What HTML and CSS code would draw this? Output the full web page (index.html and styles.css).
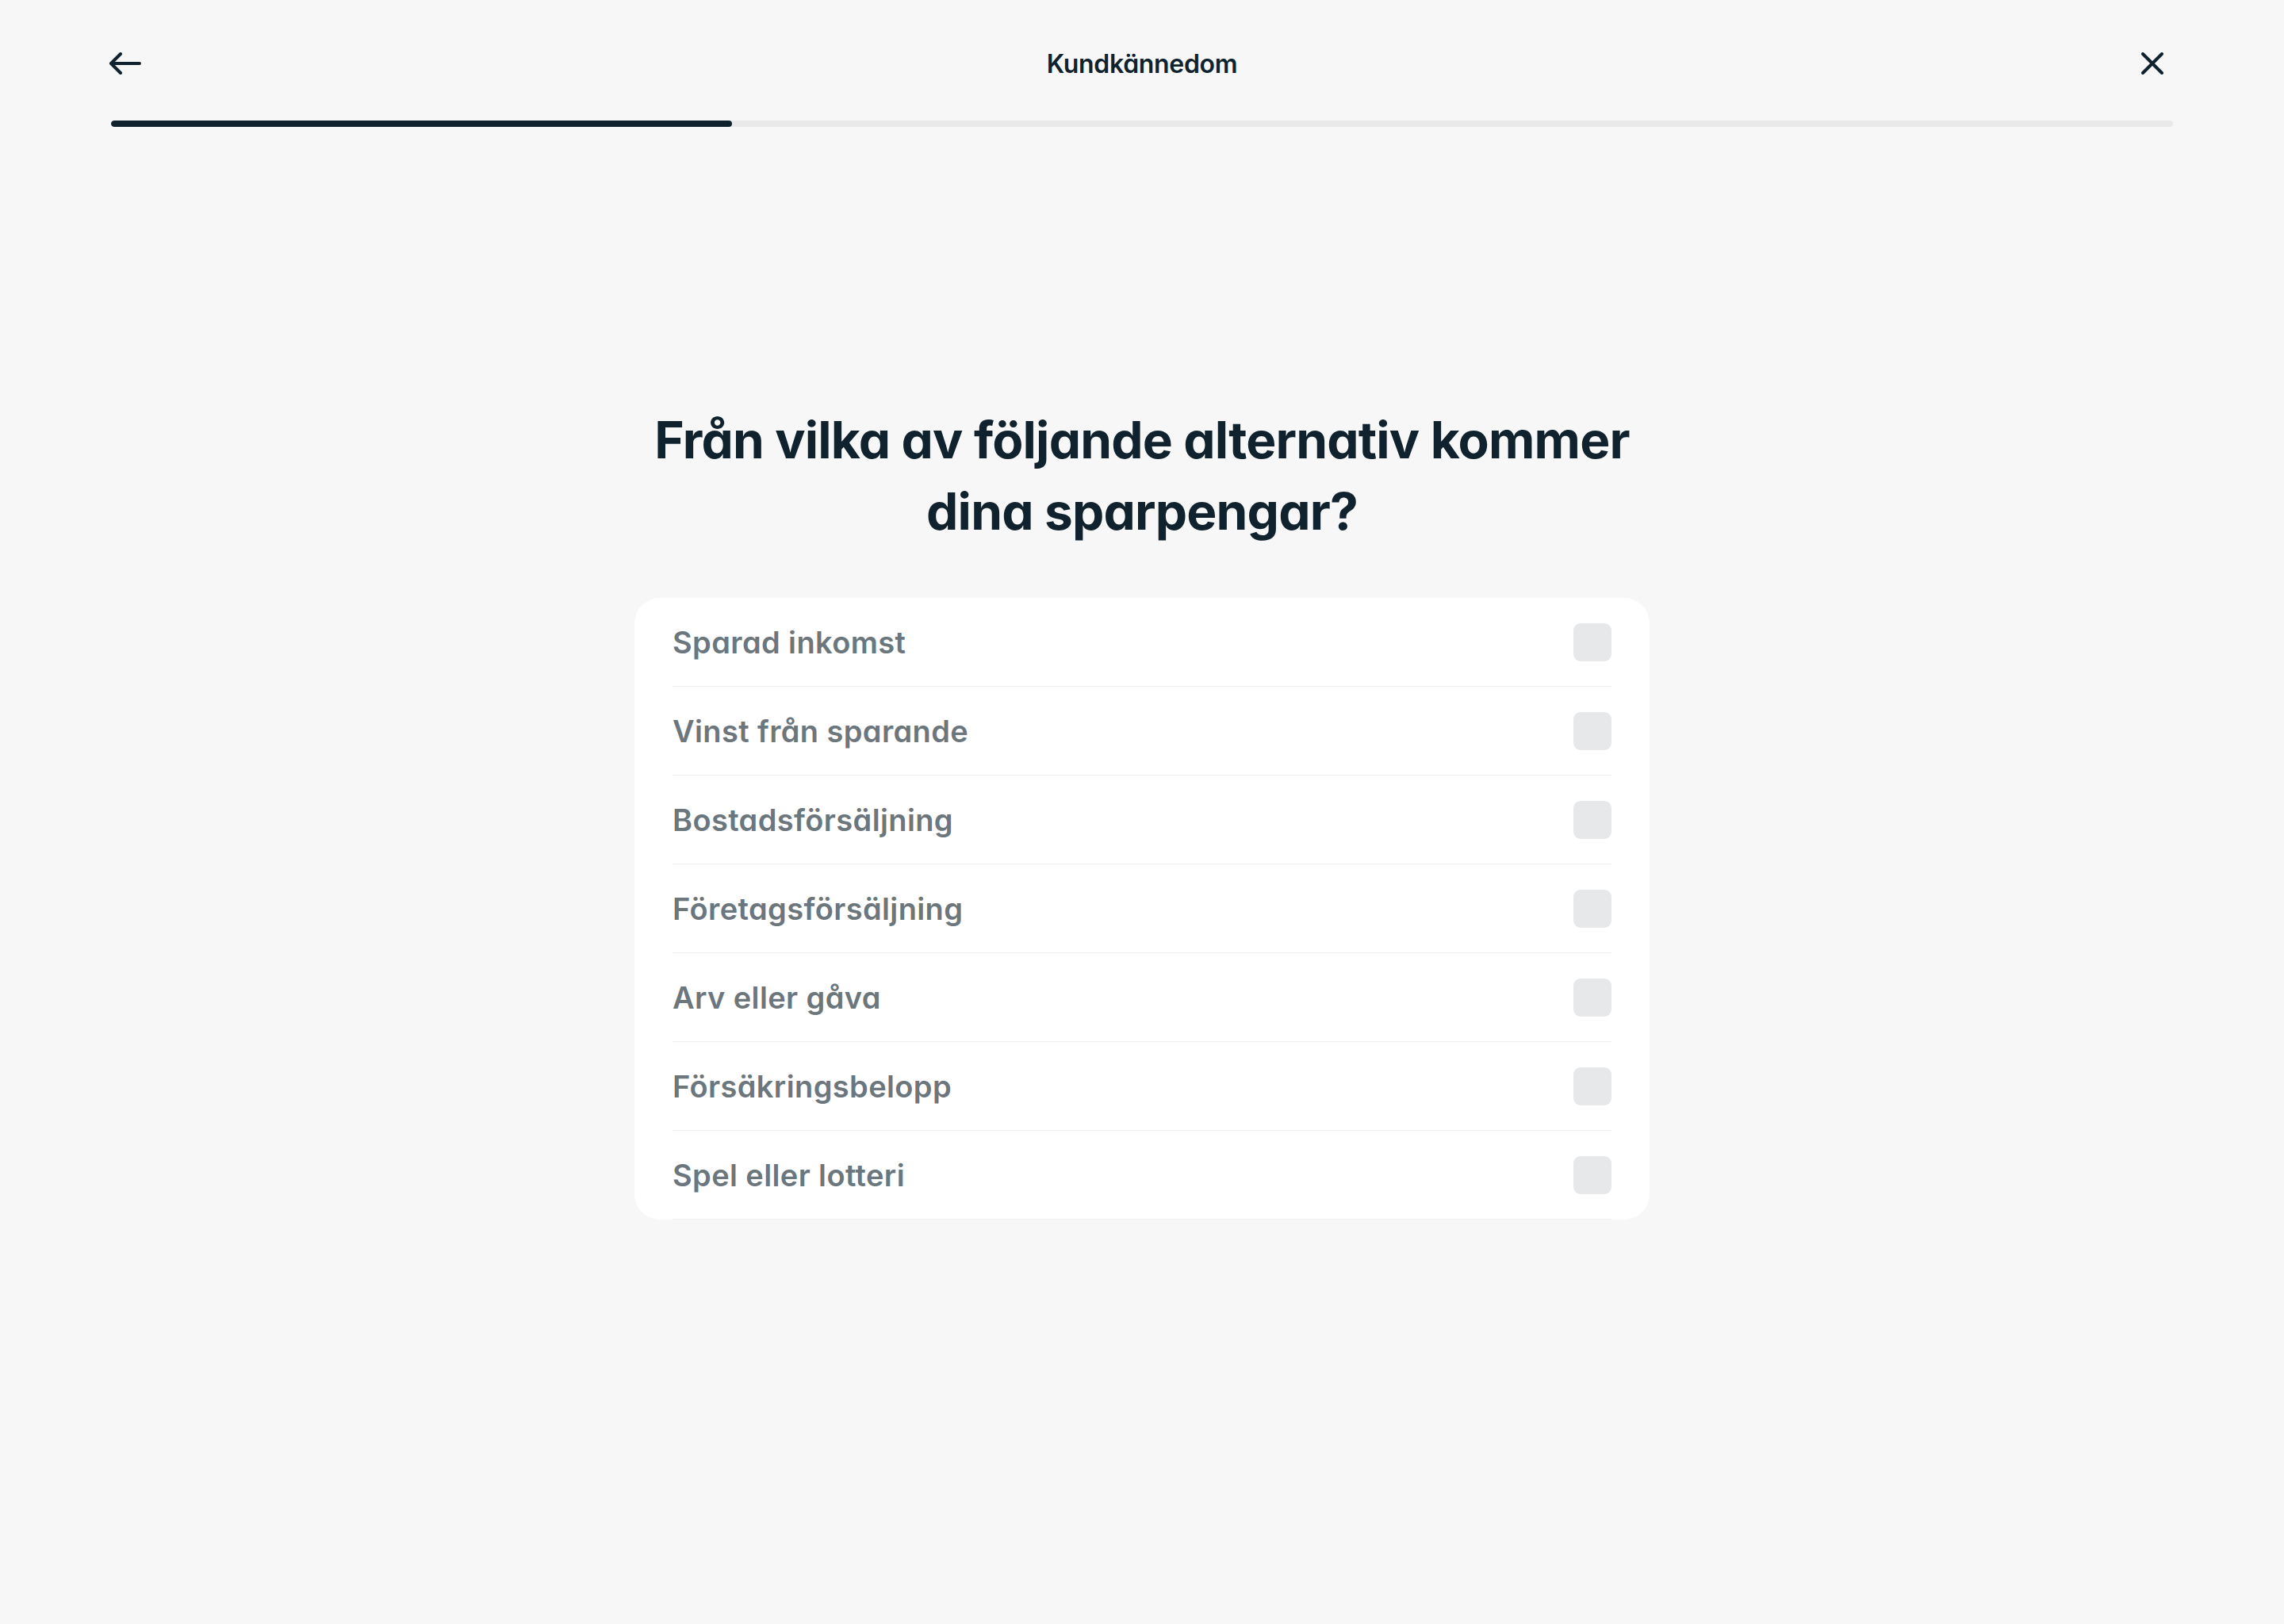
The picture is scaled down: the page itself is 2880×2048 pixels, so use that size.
FILE: index.html
```html
<!doctype html>
<html lang="sv">

<head>
  <meta charset="utf-8">
  <title>Kundkännedom</title>
  <link rel="stylesheet" href="styles.css">
</head>

<body>
  <header class="top">
    <div class="bar">
      <button class="icon-btn back" aria-label="Tillbaka">
        <svg width="40" height="28" viewBox="0 0 40 28" fill="none" stroke="currentColor" stroke-width="4" stroke-linecap="round" stroke-linejoin="round">
          <path d="M38 14H3M14 2L2 14l12 12"/>
        </svg>
      </button>
      <div class="title">Kundkännedom</div>
      <button class="icon-btn close" aria-label="Stäng">
        <svg width="28" height="28" viewBox="0 0 28 28" fill="none" stroke="currentColor" stroke-width="4" stroke-linecap="round">
          <path d="M2 2l24 24M26 2L2 26"/>
        </svg>
      </button>
    </div>
    <div class="progress"><div class="progress-fill" style="width:30.1%"></div></div>
  </header>

  <main class="question">
    <h1>Från vilka av följande alternativ kommer<br>dina sparpengar?</h1>

    <ul class="options">
      <li class="option"><span>Sparad inkomst</span><span class="check"></span></li>
      <li class="option"><span>Vinst från sparande</span><span class="check"></span></li>
      <li class="option"><span>Bostadsförsäljning</span><span class="check"></span></li>
      <li class="option"><span>Företagsförsäljning</span><span class="check"></span></li>
      <li class="option"><span>Arv eller gåva</span><span class="check"></span></li>
      <li class="option"><span>Försäkringsbelopp</span><span class="check"></span></li>
      <li class="option"><span>Spel eller lotteri</span><span class="check"></span></li>
    </ul>
  </main>
</body>

</html>
```

FILE: styles.css
```css
html { background-color:#f7f7f7; }
body { margin:0; font-family:Inter,"Noto Sans",sans-serif; font-feature-settings:"cv11"; color:#0f222d; }

.top { padding:0 140px; }
.bar { height:80px; margin-top:40px; display:flex; align-items:center; justify-content:space-between; position:relative; }
.icon-btn { background:none; border:0; padding:0; color:#0f222d; display:flex; align-items:center; cursor:pointer; }
.back { margin-left:-2px; }
.close { margin-right:12px; }
.title { position:absolute; left:0; right:0; text-align:center; font-size:32px; font-weight:600; letter-spacing:-0.01em; pointer-events:none; }

.progress { margin-top:32px; height:8px; border-radius:4px; background-color:#e9e9e9; overflow:hidden; }
.progress-fill { height:100%; border-radius:4px; background-color:#0f222d; }

.question { display:flex; flex-direction:column; align-items:center; }
h1 { margin:350px 0 0; font-size:64px; line-height:90px; font-weight:700; text-align:center; letter-spacing:-0.013em; }

.options { list-style:none; margin:64px 0 0; padding:0 48px; width:1280px; box-sizing:border-box; background-color:#fff; border-radius:32px; }
.option { display:flex; align-items:center; justify-content:space-between; padding:32px 0 31px; border-bottom:solid 1px #f1f1f1; font-size:38px; font-weight:600; color:#6b767d; letter-spacing:0.01em; }
.check { width:48px; height:48px; border-radius:9px; background-color:#e6e8ea; }
```
